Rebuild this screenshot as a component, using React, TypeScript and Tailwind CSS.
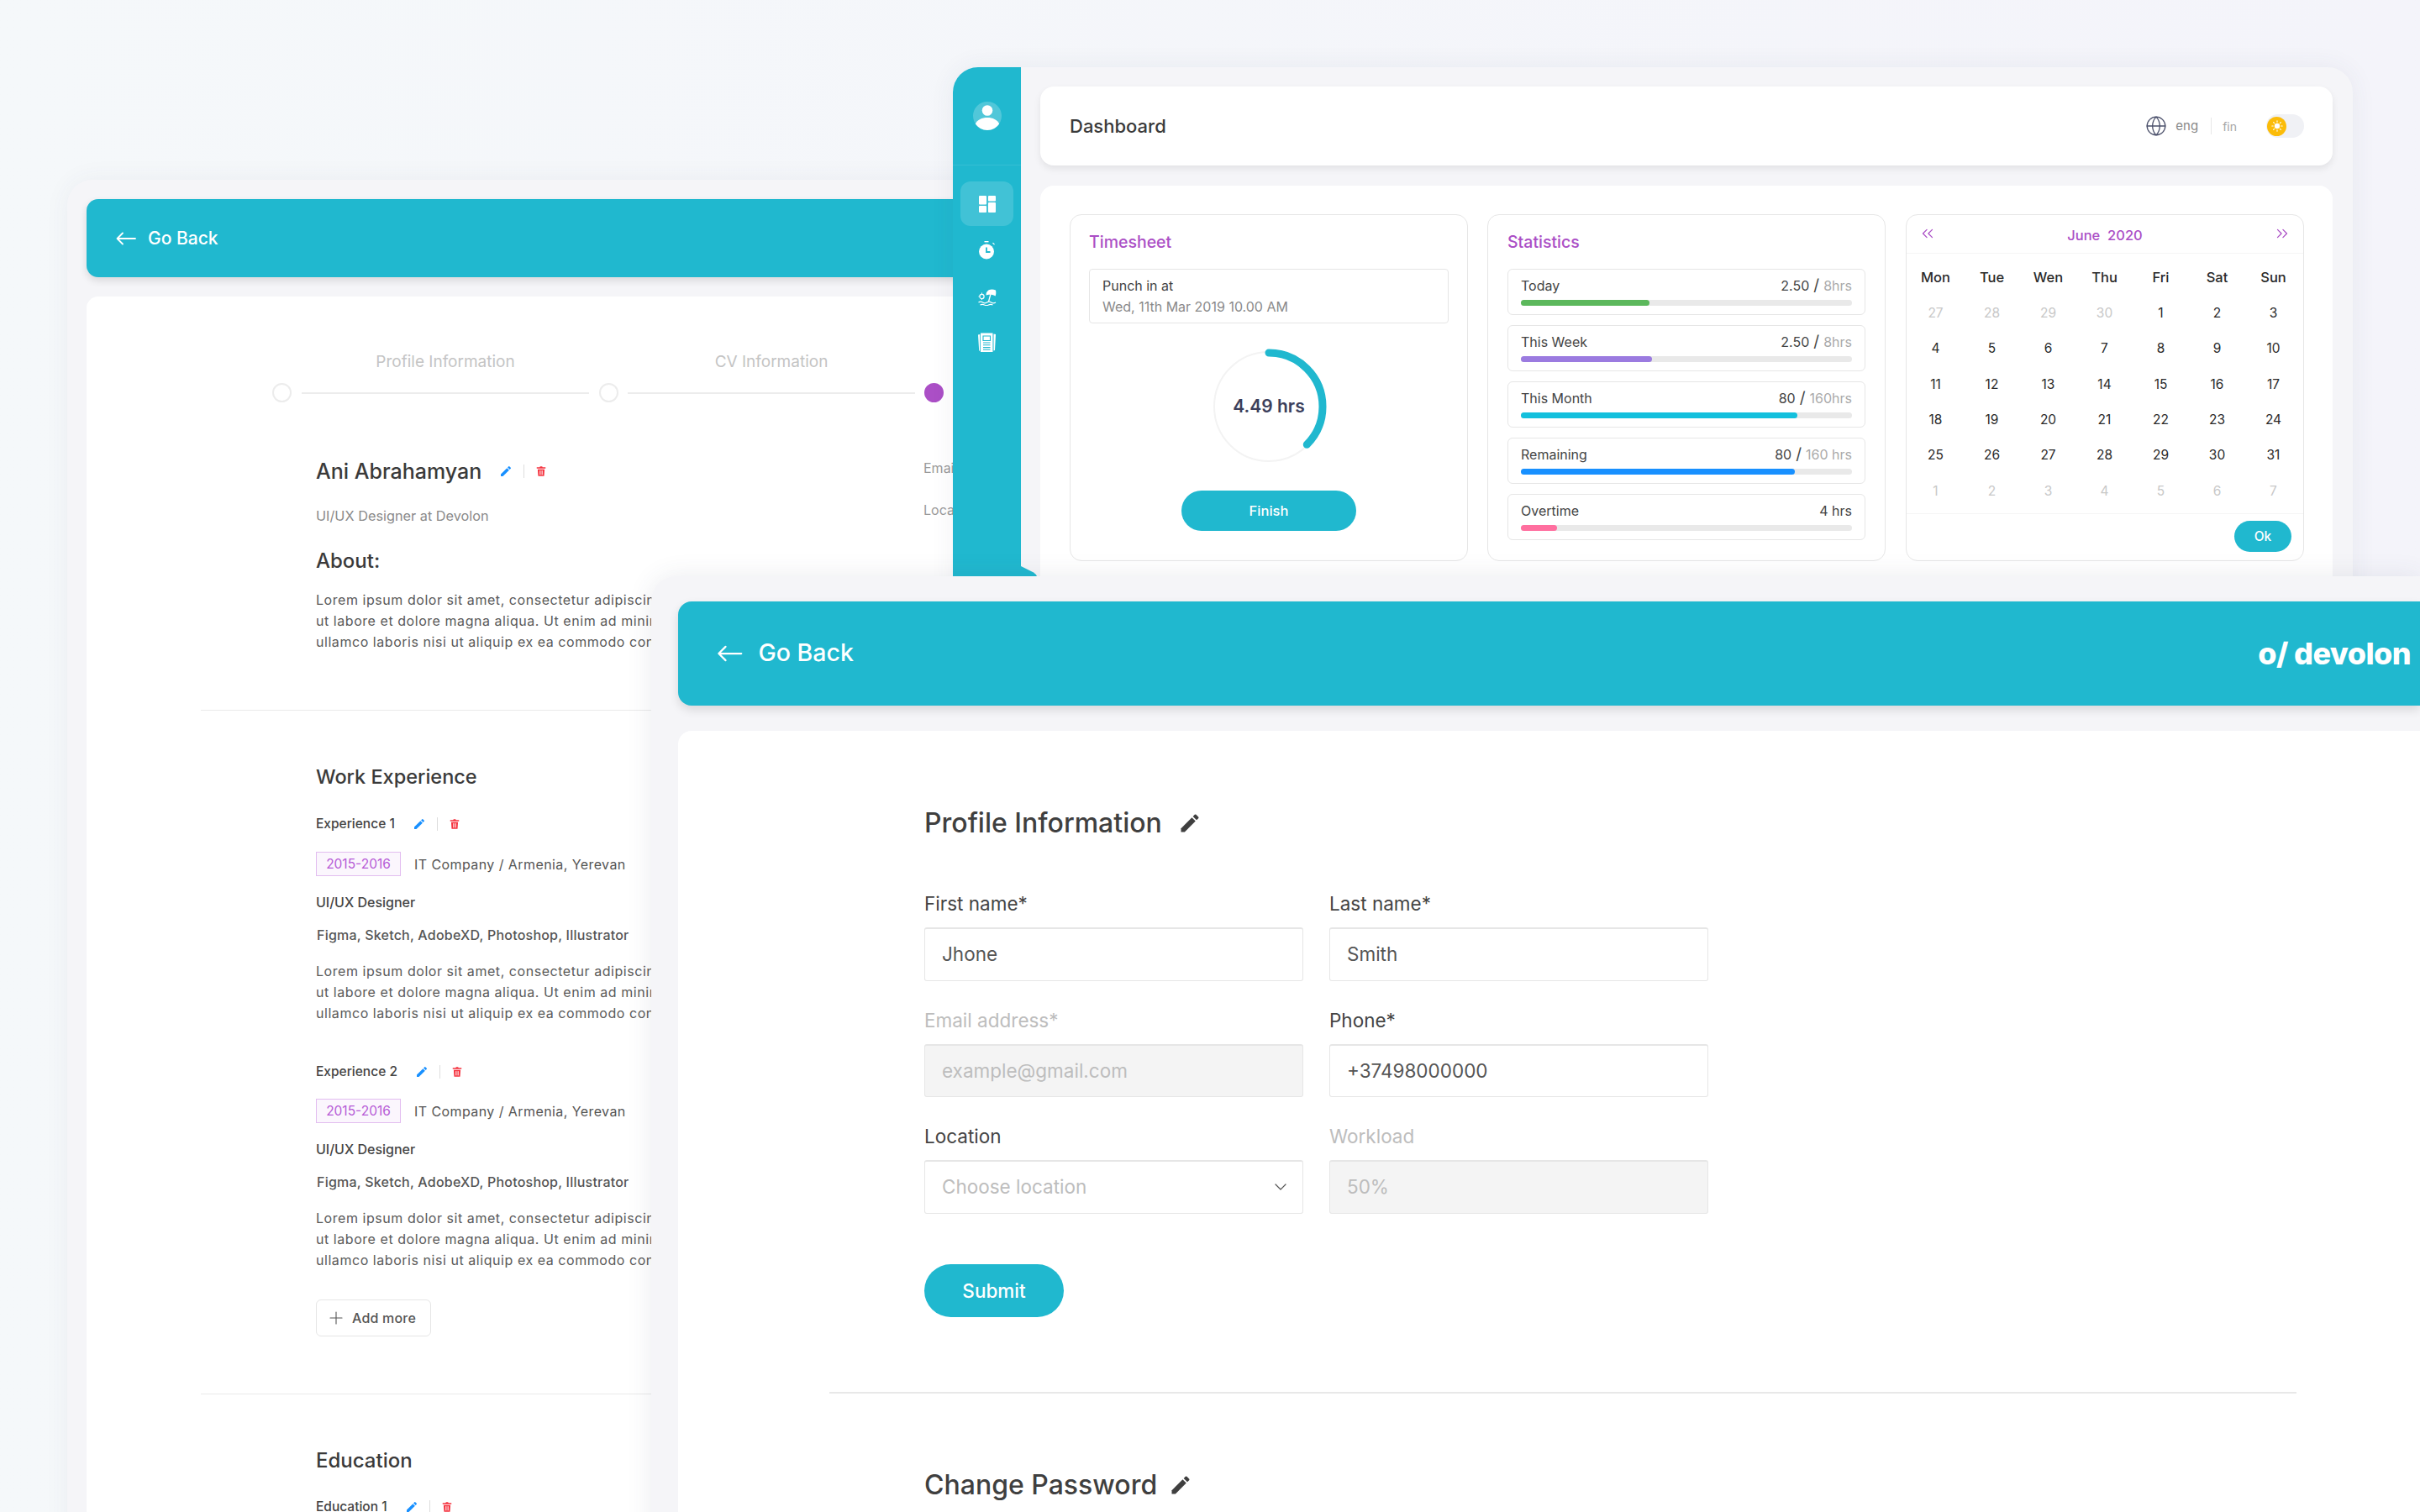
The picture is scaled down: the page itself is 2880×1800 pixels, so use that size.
import { ChevronDown, ChevronsLeft, ChevronsRight, Globe, Plus } from 'lucide-react';

const LOREM = [
  'Lorem ipsum dolor sit amet, consectetur adipiscing elit, sed do eiusmod tempor incididunt',
  'ut labore et dolore magna aliqua. Ut enim ad minim veniam, quis nostrud exercitation',
  'ullamco laboris nisi ut aliquip ex ea commodo consequat.',
];

const STATS = [
  { label: 'Today', value: '2.50', rest: '8hrs', width: 153, color: 'bg-[#5cb85c]' },
  { label: 'This Week', value: '2.50', rest: '8hrs', width: 156, color: 'bg-[#9b7be0]' },
  { label: 'This Month', value: '80', rest: '160hrs', width: 329, color: 'bg-[#13c0dd]' },
  { label: 'Remaining', value: '80', rest: '160 hrs', width: 326, color: 'bg-[#1890ff]' },
  { label: 'Overtime', value: '4 hrs', rest: '', width: 43, color: 'bg-[#ff6f9f]' },
];

const DAYS = ['Mon', 'Tue', 'Wen', 'Thu', 'Fri', 'Sat', 'Sun'];

const CALENDAR = [
  27, 28, 29, 30, 1, 2, 3, 4, 5, 6, 7, 8, 9, 10, 11, 12, 13, 14, 15, 16, 17, 18, 19, 20, 21, 22, 23, 24, 25, 26, 27, 28,
  29, 30, 31, 1, 2, 3, 4, 5, 6, 7,
];

function Pencil({ className }: { className: string }) {
  return (
    <svg viewBox="0 0 24 24" className={className} fill="currentColor">
      <path d="M3 17.25V21h3.75L17.81 9.94l-3.75-3.75L3 17.25z" />
      <path d="M20.71 7.04a1 1 0 0 0 0-1.41l-2.34-2.34a1 1 0 0 0-1.41 0l-1.83 1.83 3.75 3.75 1.83-1.83z" />
    </svg>
  );
}

function Trash() {
  return (
    <svg viewBox="0 0 24 24" className="h-[16px] w-[14px] shrink-0 text-[#f5333f]" fill="currentColor">
      <path d="M5 8h14l-1 14H6L5 8zM3 4h6l1-2h4l1 2h6v2.5H3V4z" />
      <path d="M9.5 10.5v9M12 10.5v9M14.5 10.5v9" stroke="#fff" strokeWidth="1.2" />
    </svg>
  );
}

function BackArrow({ className }: { className: string }) {
  return (
    <svg viewBox="0 0 24 16" className={className} fill="none" stroke="currentColor" strokeWidth="1.8" strokeLinecap="round" strokeLinejoin="round">
      <path d="M23 8H1.5M8 1.5L1.5 8 8 14.5" />
    </svg>
  );
}

function ActionRow({ children, className }: { children: any; className: string }) {
  return (
    <div className={`flex items-center ${className}`}>
      {children}
      <Pencil className="ml-[21px] h-[16px] w-[16px] shrink-0 text-[#1890ff]" />
      <span className="mx-[13px] h-[16px] w-px shrink-0 bg-[#dddddd]" />
      <Trash />
    </div>
  );
}

function Lorem({ className }: { className: string }) {
  return (
    <div className={`whitespace-nowrap text-[16px] leading-[25px] tracking-[0.55px] text-[#5a5a5a] ${className}`}>
      {LOREM.map((line) => (
        <div key={line}>{line}</div>
      ))}
    </div>
  );
}

function Experience({ title, first }: { title: string; first?: boolean }) {
  return (
    <div className={first ? 'mt-[28px]' : 'mt-[45px]'}>
      <ActionRow className="text-[15.5px] font-medium leading-[24px] text-[#444444]">{title}</ActionRow>
      <div className={`flex items-center ${first ? 'mt-[21px]' : 'mt-[20px]'}`}>
        <span className="flex h-[29px] w-[101px] items-center justify-center border border-[#e2bdf0] bg-[#fbf6fd] text-[15.5px] text-[#b65bd6]">
          2015-2016
        </span>
        <span className="ml-[16px] text-[16px] tracking-[0.42px] text-[#555555]">IT Company / Armenia, Yerevan</span>
      </div>
      <div className="mt-[19px] text-[16px] font-medium leading-[24px] text-[#444444]">UI/UX Designer</div>
      <div className="ml-px mt-[15px] text-[16px] font-medium leading-[24px] tracking-[0.22px] text-[#555555]">
        Figma, Sketch, AdobeXD, Photoshop, Illustrator
      </div>
      <Lorem className="mt-[19px]" />
    </div>
  );
}

function Step({ done }: { done?: boolean }) {
  return (
    <span className={`h-[23px] w-[23px] shrink-0 rounded-full border-2 ${done ? 'border-[#ab4fc6] bg-[#ab4fc6]' : 'border-[#ececec] bg-white'}`} />
  );
}

function ProfileWindow() {
  return (
    <div className="absolute left-[80px] top-[214px] h-[1700px] w-[1200px] rounded-[30px] bg-[#f5f5f8] pl-[23px] pt-[23px] shadow-[0_0_30px_rgba(60,70,100,0.06)]">
      <div className="flex h-[93px] items-center rounded-[14px] bg-[#20b8cf] pl-[35px] text-white shadow-[0_4px_10px_rgba(0,0,0,0.12)]">
        <BackArrow className="h-[16px] w-[24px]" />
        <span className="ml-[14px] text-[21px] font-medium">Go Back</span>
      </div>
      <div className="mt-[23px] h-[1500px] rounded-[14px] bg-white pt-[66px]">
        <div className="ml-[256px] flex gap-[46px] text-center text-[19px] leading-[24px] text-[#c4c4c4]">
          <div className="w-[342px] shrink-0">Profile Information</div>
          <div className="w-[342px] shrink-0">CV Information</div>
        </div>
        <div className="ml-[221px] mt-[13px] flex items-center">
          <Step />
          <span className="mx-[12px] h-[2px] w-[342px] shrink-0 bg-[#ececec]" />
          <Step />
          <span className="mx-[11px] h-[2px] w-[342px] shrink-0 bg-[#ececec]" />
          <Step done />
          <span className="ml-[11px] h-[2px] w-[342px] shrink-0 bg-[#ececec]" />
        </div>
        <div className="ml-[273px] mt-[66px] flex">
          <div className="w-[723px] shrink-0">
            <ActionRow className="text-[25px] font-medium leading-[32px] text-[#3a3a3a]">Ani Abrahamyan</ActionRow>
            <div className="mt-[25px] text-[16.3px] leading-[24px] text-[#8a8a8a]">UI/UX Designer at Devolon</div>
            <div className="mt-[26px] text-[24px] font-medium leading-[32px] text-[#3a3a3a]">About:</div>
            <Lorem className="mt-[18px]" />
          </div>
          <div className="text-[16px] text-[#9a9a9a]">
            <div className="leading-[24px]">Email</div>
            <div className="mt-[26px] leading-[24px]">Location</div>
          </div>
        </div>
        <div className="ml-[136px] mt-[68px] h-px bg-[#eaeaea]" />
        <div className="ml-[273px]">
          <div className="mt-[63px] text-[23.5px] font-medium leading-[32px] text-[#3a3a3a]">Work Experience</div>
          <Experience title="Experience 1" first />
          <Experience title="Experience 2" />
          <button className="mt-[34px] flex h-[44px] w-[137px] items-center rounded-[6px] border border-[#e6e6e6] pl-[11px] text-[16px] font-medium tracking-[0.2px] text-[#555555]">
            <Plus size={24} strokeWidth={1.1} />
            <span className="ml-[7px]">Add more</span>
          </button>
        </div>
        <div className="ml-[136px] mt-[68px] h-px bg-[#eaeaea]" />
        <div className="ml-[273px]">
          <div className="mt-[63px] text-[24px] font-medium leading-[32px] text-[#3a3a3a]">Education</div>
          <div className="mt-[27px]">
            <ActionRow className="text-[15.5px] font-medium leading-[24px] text-[#444444]">Education 1</ActionRow>
          </div>
        </div>
      </div>
    </div>
  );
}

function SideItem({ children, active }: { children: any; active?: boolean }) {
  return (
    <div className={`flex h-[53px] w-[63px] items-center justify-center rounded-[12px] ${active ? 'bg-white/15' : ''}`}>
      {children}
    </div>
  );
}

function Sidebar() {
  return (
    <div className="relative w-[81px] shrink-0 rounded-tl-[30px] bg-[#20b8cf]">
      <div className="flex h-[117px] items-center justify-center border-b border-white/10 pb-px">
        <svg viewBox="0 0 34 34" className="h-[34px] w-[34px]">
          <circle cx="17" cy="17" r="17" fill="#fff" fillOpacity="0.22" />
          <circle cx="17" cy="10.5" r="6.3" fill="#fff" />
          <path d="M2.8 26.5C5 21.5 10.5 19 17 19s12 2.5 14.2 7.5C28 31 23 34 17 34S6 31 2.8 26.5z" fill="#fff" />
        </svg>
      </div>
      <div className="ml-[9px] mt-[19px] flex flex-col gap-[2px]">
        <SideItem active>
          <svg viewBox="0 0 20 20" className="h-[20px] w-[20px]" fill="#fff">
            <rect x="0" y="0" width="9" height="10.5" rx="1" />
            <rect x="0" y="12" width="9" height="8" rx="1" />
            <rect x="11" y="0" width="9" height="6.5" rx="1" />
            <rect x="11" y="8" width="9" height="12" rx="1" />
          </svg>
        </SideItem>
        <SideItem>
          <svg viewBox="0 0 20 22" className="h-[22px] w-[20px]">
            <rect x="6.5" y="0" width="5" height="1.4" fill="#fff" />
            <path d="M16.5 2.2l2 2" stroke="#fff" strokeWidth="1.2" />
            <circle cx="9" cy="12.5" r="9" fill="#fff" />
            <path d="M9 7.5v5.5h4.5" fill="none" stroke="#20b8cf" strokeWidth="1.8" />
          </svg>
        </SideItem>
        <SideItem>
          <svg viewBox="0 0 22 22" className="h-[22px] w-[22px]" fill="none" stroke="#fff">
            <path d="M9.5 9.5C9.5 4 14 1 21 3.5 21.5 6 21.5 8.5 20.5 10.5 18.5 8.5 12.5 8 9.5 9.5z" fill="#fff" stroke="none" />
            <path d="M15 8l-2.5 9" strokeWidth="1.3" />
            <circle cx="4.5" cy="11" r="2.6" strokeWidth="1.2" />
            <path d="M4.5 6.5v1.5M4.5 14v1M0.5 11H1.5" strokeWidth="1" />
            <path d="M0.5 18c2-1.5 3-1.5 5 0s3 1.5 5 0 3-1.5 5 0 3 1.5 5.5 0M2.5 21c2-1 3-1 5 0s3 1 5 0 3-1 5 0" strokeWidth="1.2" />
          </svg>
        </SideItem>
        <SideItem>
          <svg viewBox="0 0 21 23" className="h-[23px] w-[21px]" fill="#fff">
            <path d="M0 2.5l2.2-.4v19.4l-1 .2zM18.5 1.5l2.5.6-1 19-1.5.4z" />
            <path d="M3 .5h14.5V23H3z" />
            <path d="M6 4h8.5v5.5H6zM6 12h8.5M6 14.8h8.5M6 17.6h8.5M6 20.2h8.5" fill="none" stroke="#20b8cf" strokeWidth="1.1" />
          </svg>
        </SideItem>
      </div>
      <svg viewBox="0 0 20 12" className="absolute left-[81px] top-[594px] h-[12px] w-[20px]">
        <path d="M0 0l15 7.5q3 2 4 4.5H0z" fill="#20b8cf" />
      </svg>
    </div>
  );
}

function TopBar() {
  return (
    <div className="flex h-[94px] items-center justify-between rounded-[16px] bg-white pl-[35px] pr-[34px] shadow-[0_4px_9px_rgba(0,0,0,0.08)]">
      <div className="text-[22px] font-medium text-[#3a3a3a]">Dashboard</div>
      <div className="flex items-center">
        <Globe size={26} strokeWidth={1.2} className="text-[#4a4f6a]" />
        <span className="ml-[10px] text-[15px] text-[#8a8a8a]">eng</span>
        <span className="ml-[15px] h-[20px] w-px bg-[#e8e8e8]" />
        <span className="ml-[13px] text-[14px] text-[#a5a5a5]">fin</span>
        <div className="ml-[35px] flex h-[28px] w-[45px] items-center rounded-full bg-[#f0f1f5] pl-px">
          <span className="flex h-[23px] w-[23px] items-center justify-center rounded-full bg-[#fbbc09]">
            <svg viewBox="0 0 14 14" className="h-[14px] w-[14px]" fill="#fff" stroke="#fff" strokeWidth="1.1" strokeLinecap="round">
              <circle cx="7" cy="7" r="3.2" stroke="none" />
              <path d="M7 .8v1.4M7 11.8v1.4M.8 7h1.4M11.8 7h1.4M2.6 2.6l1 1M10.4 10.4l1 1M2.6 11.4l1-1M10.4 3.6l1-1" />
            </svg>
          </span>
        </div>
      </div>
    </div>
  );
}

function Timesheet() {
  return (
    <div className="h-[413px] w-[474px] rounded-[14px] border border-[#e6e6e6] px-[22px] pt-[19px]">
      <div className="text-[19.5px] font-medium leading-[26px] text-[#ab4fc6]">Timesheet</div>
      <div className="mt-[19px] flex h-[65px] flex-col justify-center rounded-[4px] border border-[#e6e6e6] pl-[15px] text-[16px] leading-[25px]">
        <div className="text-[#444444]">Punch in at</div>
        <div className="text-[#8a8a8a]">Wed, 11th Mar 2019 10.00 AM</div>
      </div>
      <div className="relative mx-auto mt-[25px] h-[148px] w-[148px]">
        <svg viewBox="0 0 148 148" className="h-[148px] w-[148px] -rotate-90">
          <circle cx="74" cy="74" r="65" fill="none" stroke="#f3f3f3" strokeWidth="2" />
          <circle cx="74" cy="74" r="64" fill="none" stroke="#20b8cf" strokeWidth="9" strokeLinecap="round" pathLength="100" strokeDasharray="37.5 100" />
        </svg>
        <div className="absolute inset-0 flex items-center justify-center text-[21px] font-semibold text-[#3c3f5c]">4.49 hrs</div>
      </div>
      <button className="mx-auto mt-[26px] flex h-[48px] w-[208px] items-center justify-center rounded-full bg-[#20b8cf] text-[16.5px] font-medium text-white">
        Finish
      </button>
    </div>
  );
}

function Statistics() {
  return (
    <div className="h-[413px] w-[474px] rounded-[14px] border border-[#e6e6e6] px-[23px] pt-[19px]">
      <div className="text-[19.5px] font-medium leading-[26px] text-[#ab4fc6]">Statistics</div>
      <div className="mt-[19px] flex flex-col gap-[12px]">
        {STATS.map((row) => (
          <div key={row.label} className="h-[55px] rounded-[6px] border border-[#e6e6e6] px-[15px] pt-[8px]">
            <div className="flex justify-between text-[16px] leading-[22px] text-[#444444]">
              <span>{row.label}</span>
              <span>
                {row.value}
                {row.rest && <span className="mx-[5px] text-[19px]">/</span>}
                {row.rest && <span className="text-[#aaaaaa]">{row.rest}</span>}
              </span>
            </div>
            <div className="mt-[6px] h-[7px] rounded-full bg-[#e9e9e9]">
              <div className={`h-[7px] rounded-full ${row.color}`} style={{ width: row.width }} />
            </div>
          </div>
        ))}
      </div>
    </div>
  );
}

function Calendar() {
  return (
    <div className="ml-px h-[413px] w-[474px] rounded-[14px] border border-[#e6e6e6]">
      <div className="flex h-[46px] items-center justify-between border-b border-[#f5f5f5] px-[14px] text-[#ab4fc6]">
        <ChevronsLeft size={22} strokeWidth={1.4} className="-mt-[2px]" />
        <span className="mt-[3px] text-[16.5px] font-medium">June&nbsp; 2020</span>
        <ChevronsRight size={22} strokeWidth={1.4} className="-mt-[2px]" />
      </div>
      <div className="ml-px mt-[7px] grid w-[469px] auto-rows-[42.33px] grid-cols-7 items-center text-center text-[15.5px] text-[#2a2a2a]">
        {DAYS.map((day) => (
          <div key={day} className="text-[16.5px] font-medium">
            {day}
          </div>
        ))}
        {CALENDAR.map((date, i) => (
          <div key={i} className={i < 4 || i > 34 ? 'text-[#c8c8c8]' : ''}>
            {date}
          </div>
        ))}
      </div>
      <div className="mt-[6px] flex justify-end border-t border-[#f5f5f5] pr-[14px] pt-[8px]">
        <button className="flex h-[37px] w-[68px] items-center justify-center rounded-full bg-[#20b8cf] text-[15.5px] font-medium text-white">
          Ok
        </button>
      </div>
    </div>
  );
}

function DashboardWindow() {
  return (
    <div className="absolute left-[1134px] top-[80px] flex h-[640px] w-[1666px] rounded-[30px] bg-[#f5f5f8] shadow-[0_0_30px_rgba(60,70,100,0.07)]">
      <Sidebar />
      <div className="flex-1 pl-[23px] pr-[24px] pt-[23px]">
        <TopBar />
        <div className="mt-[24px] flex h-[500px] gap-[23px] rounded-[16px] bg-white pl-[35px] pt-[34px]">
          <Timesheet />
          <Statistics />
          <Calendar />
        </div>
      </div>
    </div>
  );
}

function Field({ label, value, muted, filled, select }: { label: string; value: string; muted?: boolean; filled?: boolean; select?: boolean }) {
  return (
    <div>
      <div className={`text-[22.5px] leading-[28px] ${muted ? 'text-[#bdbdbd]' : 'text-[#444444]'}`}>{label}</div>
      <div
        className={`mt-[14px] flex h-[63.5px] items-center justify-between rounded-[3px] border border-[#e6e6e6] border-t-2 pl-[20px] pr-[14px] text-[22.5px] ${
          filled ? 'bg-[#f4f4f4] text-[#bdbdbd]' : select ? 'text-[#bdbdbd]' : 'text-[#555555]'
        }`}
      >
        {value}
        {select && <ChevronDown size={24} strokeWidth={1.2} className="text-[#555555]" />}
      </div>
    </div>
  );
}

function SettingsWindow() {
  return (
    <div className="absolute left-[775px] top-[686px] h-[1200px] w-[2105px] rounded-tl-[30px] bg-[#f5f5f8] pl-[31.5px] pt-[30px] shadow-[0_0_30px_rgba(60,70,100,0.1)]">
      <div className="flex h-[123.5px] items-center justify-between rounded-l-[16px] bg-[#20b8cf] pl-[46px] pr-[11px] text-white shadow-[0_5px_12px_rgba(0,0,0,0.12)]">
        <div className="flex items-center">
          <BackArrow className="h-[20px] w-[31px]" />
          <span className="ml-[19px] text-[28.5px] font-medium">Go Back</span>
        </div>
        <div className="text-[36px] font-extrabold tracking-[-0.6px]">o/ devolon</div>
      </div>
      <div className="mt-[30.5px] h-[1000px] rounded-l-[16px] bg-white pl-[293.5px] pt-[88px]">
        <div className="flex items-center text-[32px] font-medium leading-[44px] text-[#3f3f3f]">
          Profile Information
          <Pencil className="ml-[19px] h-[28px] w-[28px] text-[#3f3f3f]" />
        </div>
        <div className="mt-[60px] grid w-[933px] grid-cols-[451px_451px] gap-x-[31px] gap-y-[33px]">
          <Field label="First name*" value="Jhone" />
          <Field label="Last name*" value="Smith" />
          <Field label="Email address*" value="example@gmail.com" muted filled />
          <Field label="Phone*" value="+37498000000" />
          <Field label="Location" value="Choose location" select />
          <Field label="Workload" value="50%" muted filled />
        </div>
        <button className="mt-[60.5px] h-[63px] w-[166px] rounded-full bg-[#20b8cf] text-[22.5px] font-medium text-white">Submit</button>
        <div className="-ml-[113px] mt-[89px] h-[2px] w-[1746px] bg-[#e8e8e8]" />
        <div className="mt-[87px] flex items-center text-[32px] font-medium leading-[44px] text-[#3f3f3f]">
          Change Password
          <Pencil className="ml-[14px] h-[28px] w-[28px] text-[#3f3f3f]" />
        </div>
      </div>
    </div>
  );
}

export default function App() {
  return (
    <div className="relative h-[1800px] w-[2880px] overflow-hidden bg-gradient-to-r from-[#f5f8fa] to-[#f4f4fa] [font-family:Inter,sans-serif]">
      <ProfileWindow />
      <DashboardWindow />
      <SettingsWindow />
    </div>
  );
}
